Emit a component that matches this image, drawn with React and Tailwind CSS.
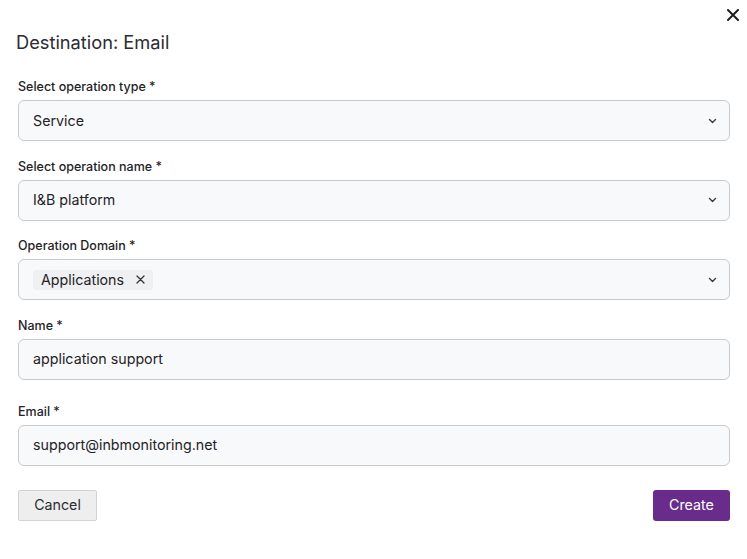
import React from "react";

const font = { fontFamily: "Inter, 'Noto Sans', sans-serif" };

function Chevron() {
  return (
    <svg width="9" height="6" viewBox="0 0 9 6" fill="none" className="shrink-0">
      <path d="M1.5 1.5 L4.5 4.5 L7.5 1.5" stroke="#3a3a3a" strokeWidth="1.4" strokeLinecap="round" strokeLinejoin="round" />
    </svg>
  );
}

function Field({ label, children, className = "" }) {
  return (
    <div className={"flex flex-col " + className}>
      <label className="text-[12.5px] leading-4 font-medium text-[#1f2328] mb-[5px]">{label}</label>
      {children}
    </div>
  );
}

function Box({ children, select }) {
  return (
    <div className="h-[41px] flex items-center justify-between rounded-[6px] border border-[#c9cacc] bg-[#f8f9fa] pl-[14px] pr-[12px]">
      <div className="flex items-center text-[14.25px] text-[#1f2328]">{children}</div>
      {select && <Chevron />}
    </div>
  );
}

export default function App() {
  return (
    <div style={font} className="w-[747px] h-[559px] bg-white relative">
      <button className="absolute top-[9px] right-[8px] w-[12px] h-[12px] flex items-center justify-center text-[#222]">
        <svg width="12" height="12" viewBox="0 0 12 12" fill="none">
          <path d="M1 1 L11 11 M11 1 L1 11" stroke="#1f1f1f" strokeWidth="2" strokeLinecap="round" />
        </svg>
      </button>
      <div className="pl-[18px] pr-[17px] pt-[28px]">
        <h2 className="-ml-[2px] text-[18.25px] leading-7 font-normal text-[#2a2c30]">Destination: Email</h2>
        <div className="mt-[23px] flex flex-col gap-[17.5px]">
          <Field label="Select operation type *">
            <Box select>Service</Box>
          </Field>
          <Field label="Select operation name *">
            <Box select>I&amp;B platform</Box>
          </Field>
          <Field label="Operation Domain *">
            <Box select>
              <span className="flex items-center gap-[12px] bg-[#eff0f1] rounded-[3px] h-[20px] pl-[8px] pr-[8px]">
                Applications
                <svg width="9" height="9" viewBox="0 0 9 9" fill="none">
                  <path d="M1 1 L8 8 M8 1 L1 8" stroke="#333" strokeWidth="1.25" strokeLinecap="round" />
                </svg>
              </span>
            </Box>
          </Field>
          <Field label="Name *">
            <Box>application support</Box>
          </Field>
          <Field label="Email *" className="mt-[6.5px]">
            <Box>support@inbmonitoring.net</Box>
          </Field>
        </div>
        <div className="mt-[24px] flex items-center justify-between">
          <button className="h-[31px] w-[79px] rounded-[2px] border border-[#d2d3d5] bg-[#eeeeef] text-[14.25px] text-[#2a2c30]">
            Cancel
          </button>
          <button className="h-[31px] w-[77px] rounded-[3px] bg-[#6a2c8b] text-[14.25px] text-white">
            Create
          </button>
        </div>
      </div>
    </div>
  );
}
